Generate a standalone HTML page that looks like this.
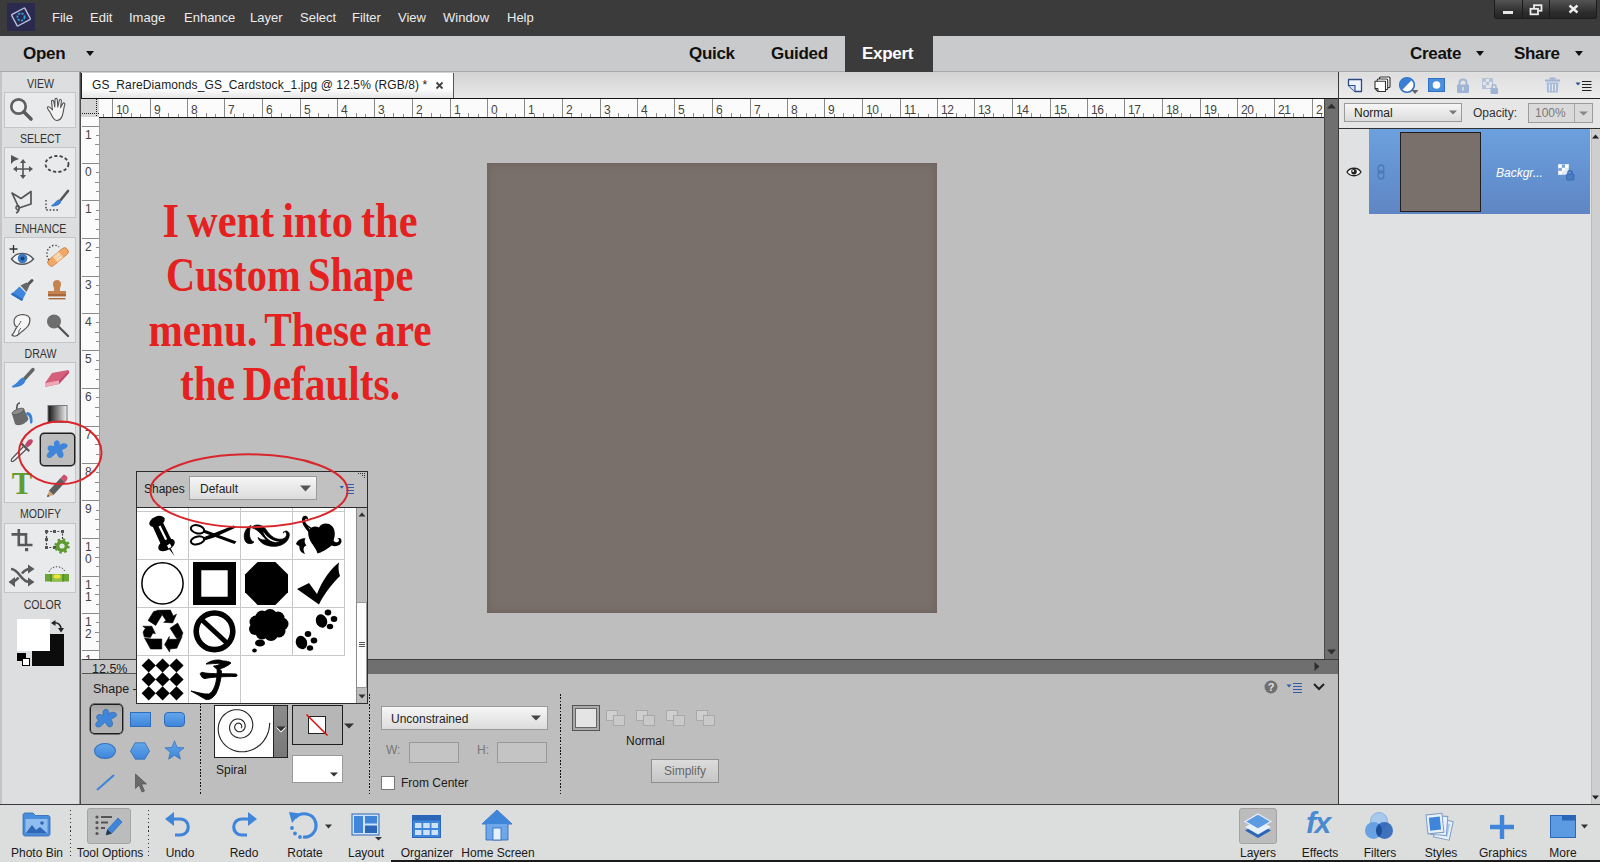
<!DOCTYPE html>
<html>
<head>
<meta charset="utf-8">
<title>Photoshop Elements</title>
<style>
*{box-sizing:border-box;margin:0;padding:0}
html,body{width:1600px;height:862px;overflow:hidden;background:#bdbdbd;font-family:"Liberation Sans",sans-serif;font-size:12px;color:#222}
.abs{position:absolute}
#root{position:relative;width:1600px;height:862px;overflow:hidden}
/* top bars */
#menubar{left:0;top:0;width:1600px;height:36px;background:#3b3b3b}
#menubar span{position:absolute;top:10px;font-size:13px;color:#ececec;white-space:nowrap}
#modebar{left:0;top:36px;width:1600px;height:36px;background:#c9cacb;border-bottom:1px solid #a9a9a9}
.mode{position:absolute;top:8px;font-size:17px;font-weight:bold;color:#111;white-space:nowrap;letter-spacing:-0.3px}
/* left toolbar */
#toolbar{left:0;top:72px;width:81px;height:733px;background:#dddedf}
.tlabel{position:absolute;left:0;width:81px;text-align:center;font-size:12px;color:#333;transform:scaleX(.88)}
.tgroup{position:absolute;left:4px;width:72px;background:#e9eaeb;border:1px solid #c4c5c6}
/* doc area */
.rl{position:absolute;font-size:12px;color:#444;line-height:12px;letter-spacing:-0.300px}
.dd{background:linear-gradient(#f6f6f6,#dcdcdc);border:1px solid #9a9a9a;font-size:12px;color:#222}
.dd span{position:absolute;white-space:nowrap}
.tl{position:absolute;width:100px;text-align:center;font-size:12px;color:#1a1a1a;white-space:nowrap}
#tabbar{left:81px;top:72px;width:1258px;height:26px;background:linear-gradient(#d2d2d2,#e9e9e9)}
#tab{left:81px;top:73px;width:373px;height:25px;background:linear-gradient(#ffffff 60%,#e6e6e6);border-right:1px solid #555;border-left:1px solid #222}
#canvas{left:99px;top:118px;width:1225px;height:541px;background:#bebebe}
#photo{left:487px;top:163px;width:450px;height:450px;background:#7a706b;box-shadow:inset 0 0 7px 1px rgba(100,88,78,.55)}
#rightpanel{left:1339px;top:72px;width:261px;height:733px;background:#e0e1e2}
#options{left:81px;top:674px;width:1257px;height:130px;background:#bebebe}
#taskbar{left:0;top:805px;width:1600px;height:57px;background:#dcdddd}
</style>
</head>
<body>
<div id="root">
<div id="menubar" class="abs">
<svg class="abs" style="left:6px;top:2px" width="30" height="30" viewBox="0 0 30 30"><rect x="1" y="1" width="28" height="28" fill="#2b2a4e"/><g transform="rotate(-28 15 15)"><rect x="7.5" y="8.5" width="15" height="13" rx="1" fill="none" stroke="#b9c6e6" stroke-width="1.3"/></g><circle cx="15" cy="15" r="3.6" fill="none" stroke="#2f9fe6" stroke-width="1.8" stroke-dasharray="2.2 1.2"/></svg>
<span style="left:52px">File</span><span style="left:90px">Edit</span><span style="left:129px">Image</span><span style="left:184px">Enhance</span><span style="left:250px">Layer</span><span style="left:300px">Select</span><span style="left:352px">Filter</span><span style="left:398px">View</span><span style="left:443px">Window</span><span style="left:507px">Help</span>
<div class="abs" style="left:1494px;top:0;width:103px;height:19px;background:linear-gradient(#545454,#2c2c2c 70%,#262626);border:1px solid #1c1c1c;border-top:none;border-radius:0 0 3px 3px"></div>
<div class="abs" style="left:1522px;top:0px;width:1px;height:18px;background:#1c1c1c"></div>
<div class="abs" style="left:1549px;top:0px;width:1px;height:18px;background:#1c1c1c"></div>
<div class="abs" style="left:1503px;top:11px;width:10px;height:3px;background:#e6e6e6"></div>
<svg class="abs" style="left:1529px;top:4px" width="14" height="12" viewBox="0 0 14 12"><rect x="5" y="1.200" width="7.500" height="5.500" fill="none" stroke="#ececec" stroke-width="1.800"/><rect x="1.500" y="4.800" width="7.500" height="5.500" fill="#3a3a3a" stroke="#ececec" stroke-width="1.800"/></svg>
<svg class="abs" style="left:1568px;top:4px" width="11" height="10" viewBox="0 0 11 10"><path d="M1.500 1.500 L9.500 8.500 M9.500 1.500 L1.500 8.500" stroke="#ececec" stroke-width="2.400" fill="none"/></svg>
</div>
<div id="modebar" class="abs">
<span class="mode" style="left:23px">Open</span>
<div class="abs" style="left:86px;top:15px;border:4px solid transparent;border-top:5px solid #111;border-bottom:none"></div>
<span class="mode" style="left:689px">Quick</span>
<span class="mode" style="left:771px">Guided</span>
<div class="abs" style="left:845px;top:0;width:88px;height:36px;background:#3b3b3b"></div>
<span class="mode" style="left:862px;color:#fff">Expert</span>
<span class="mode" style="left:1410px">Create</span>
<div class="abs" style="left:1476px;top:15px;border:4px solid transparent;border-top:5px solid #111;border-bottom:none"></div>
<span class="mode" style="left:1514px">Share</span>
<div class="abs" style="left:1575px;top:15px;border:4px solid transparent;border-top:5px solid #111;border-bottom:none"></div>
</div>
<div id="toolbar" class="abs"><div class="abs" style="left:0;top:0;width:2px;height:733px;background:#c4c5c6"></div>
<div class="tgroup" style="top:20px;height:36px"></div>
<div class="tgroup" style="top:75px;height:71px"></div>
<div class="tgroup" style="top:165px;height:106px"></div>
<div class="tgroup" style="top:290px;height:141px"></div>
<div class="tgroup" style="top:451px;height:70px"></div>
<div class="tlabel" style="top:5px">VIEW</div>
<div class="tlabel" style="top:60px">SELECT</div>
<div class="tlabel" style="top:150px">ENHANCE</div>
<div class="tlabel" style="top:275px">DRAW</div>
<div class="tlabel" style="top:435px">MODIFY</div>
<div class="tlabel" style="top:526px;left:2px">COLOR</div>
<div class="abs" style="left:40px;top:361px;width:35px;height:33px;background:#bdbdbd;border:1px solid #1c1c1c;box-shadow:0 0 0 0.400px #1c1c1c;border-radius:4px"></div>
<svg class="abs" style="left:6px;top:22px" width="30" height="30" viewBox="0 0 30 30"><circle cx="12.500" cy="12.500" r="7.200" fill="#eef0f1" stroke="#606060" stroke-width="2.700"/><path d="M18 18 L25 25" stroke="#5a5a5a" stroke-width="3.600" stroke-linecap="round"/></svg><svg class="abs" style="left:42px;top:23px" width="30" height="30" viewBox="0 0 30 30"><path d="M8 17 C6 14 4.5 13 5.5 12 C7 11 9 13 10.5 15 L9.5 6.5 C9.5 5 11.5 5 11.8 6.5 L12.8 12 L13 4.5 C13 3 15.2 3 15.3 4.5 L15.8 12 L17.3 5.5 C17.6 4 19.6 4.4 19.4 6 L18.6 12.6 L20.8 8.5 C21.5 7.2 23.3 8 22.8 9.5 C21.5 13.5 21.5 17 20.5 20 C19.5 23.5 17.5 25.5 14.5 25.5 C11.5 25.5 9.5 20 8 17 Z" fill="#f4f4f4" stroke="#555" stroke-width="1.1" stroke-linejoin="round"/></svg><svg class="abs" style="left:7px;top:79px" width="30" height="30" viewBox="0 0 30 30"><path d="M4 4 L4 13 L7 10 L12 8 Z" fill="#555"/><path d="M16 10 V26 M8 18 H24" stroke="#555" stroke-width="1.6" fill="none"/><path d="M16 8 L13 12 H19 Z M16 28 L13 24 H19 Z M6 18 L10 15 V21 Z M26 18 L22 15 V21 Z" fill="#555"/></svg><svg class="abs" style="left:42px;top:77px" width="30" height="30" viewBox="0 0 30 30"><ellipse cx="15" cy="15" rx="11.5" ry="8" fill="none" stroke="#444" stroke-width="1.8" stroke-dasharray="3.2 2.2"/></svg><svg class="abs" style="left:7px;top:114px" width="30" height="30" viewBox="0 0 30 30"><path d="M5 7 L14 12.5 L24 5.5 L24 18 L12 22 L5 7 Z" fill="none" stroke="#555" stroke-width="1.7" stroke-linejoin="round"/><path d="M12 20 C9 19 8 22 10 23.5 C12 24.5 13 22 12 20 C12.5 23 12 26 9 27" fill="none" stroke="#555" stroke-width="1.5"/></svg><svg class="abs" style="left:42px;top:114px" width="30" height="30" viewBox="0 0 30 30"><path d="M26 5 L17.5 15.5" stroke="#555" stroke-width="2.6" stroke-linecap="round"/><path d="M18.5 14.5 C20 17 17 20 11 20.5 C9 20.5 8.5 19.5 10.5 18.5 C13 17 14 14.5 16.5 13.5 Z" fill="#3d7fd0"/><path d="M4 14 V24 H17" fill="none" stroke="#444" stroke-width="1.4" stroke-dasharray="1.6 1.8"/></svg><svg class="abs" style="left:8px;top:170px" width="30" height="30" viewBox="0 0 30 30"><path d="M3.5 17 C9 9.5 19 9.5 25.5 17 C19 24 9 24 3.5 17 Z" fill="#f4f4f4" stroke="#555" stroke-width="1.4"/><circle cx="14.5" cy="16.5" r="4.8" fill="#3c78c2"/><circle cx="14.5" cy="16.5" r="2" fill="#173f7c"/><path d="M5.5 3 V11 M1.5 7 H9.5" stroke="#333" stroke-width="1.3"/></svg><svg class="abs" style="left:42px;top:169px" width="30" height="30" viewBox="0 0 30 30"><g transform="rotate(-40 16 16)"><rect x="4" y="12.300" width="24" height="7.400" rx="3.200" fill="#f1a866" stroke="#c97f3f" stroke-width="0.800"/><rect x="12" y="12.300" width="8" height="7.400" fill="#f7cba0"/><circle cx="14.5" cy="14.5" r="0.7" fill="#fff"/><circle cx="17.5" cy="14.5" r="0.7" fill="#fff"/><circle cx="14.5" cy="17.5" r="0.7" fill="#fff"/><circle cx="17.5" cy="17.5" r="0.7" fill="#fff"/></g><path d="M7 19 C3 14 5 6 11 4.5 C14 4 16 5 17 6" fill="none" stroke="#444" stroke-width="1.4" stroke-dasharray="1.5 1.8"/></svg><svg class="abs" style="left:7px;top:203px" width="30" height="30" viewBox="0 0 30 30"><path d="M25 5.5 L19 11.5" stroke="#555" stroke-width="3" stroke-linecap="round"/><path d="M13.5 10.5 L19.5 7.5 L22.5 10.5 L19.5 17 Z" fill="#666"/><path d="M12.5 11.5 L19 18 L15 26 L4 19.5 Z" fill="#3f87dc"/><path d="M4 19.5 L15 26 L16 24 L5 17.5Z" fill="#2b6cbd"/></svg><svg class="abs" style="left:42px;top:203px" width="30" height="30" viewBox="0 0 30 30"><path d="M12 13 C10 9 11 5 15 5 C19 5 20 9 18 13 L18 16 H24 V21 H6 V16 H12 Z" fill="#c58350"/><rect x="6" y="19" width="18" height="2.4" fill="#a7683a"/><rect x="6.5" y="23" width="17" height="1.4" fill="#a7683a"/></svg><svg class="abs" style="left:7px;top:238px" width="30" height="30" viewBox="0 0 30 30"><path d="M5 25 C8 22 8 19 10 17 C7 16 6 11 8 8 C10 4.5 17 3.5 21 6 C24 8 23 13 21 16 C19 19 15 21 12 24 C10 26 7 27 5 25 Z" fill="#f6f6f6" stroke="#555" stroke-width="1.2"/><path d="M10 17 C12 15 13 13 14 11 M12 24 C11 22 12 20 14 18" fill="none" stroke="#555" stroke-width="1"/></svg><svg class="abs" style="left:42px;top:238px" width="30" height="30" viewBox="0 0 30 30"><circle cx="12" cy="11.5" r="7" fill="#6e6e6e"/><path d="M16.5 16.5 L26 26" stroke="#555" stroke-width="2.4" stroke-linecap="round"/></svg><svg class="abs" style="left:7px;top:293px" width="30" height="30" viewBox="0 0 30 30"><path d="M26 4.500 L16.500 15" stroke="#646464" stroke-width="3.400" stroke-linecap="round"/><path d="M17.8 14 C19.5 17 16 21.5 7 22.5 C4.5 22.7 4 21.5 6 20.5 C9.5 19 11.5 15 15.5 12.5 Z" fill="#3d82d6"/></svg><svg class="abs" style="left:42px;top:293px" width="30" height="30" viewBox="0 0 30 30"><path d="M10 8 L26 5 L27 8 L17 19 L3 22 L3 18 Z" fill="#d4607c"/><path d="M3 18 L17 15.5 L17 19 L3 22 Z" fill="#f0a6b6"/><path d="M17 15.5 L27 5 L27 8 L17 19 Z" fill="#c04c6a"/></svg><svg class="abs" style="left:7px;top:328px" width="30" height="30" viewBox="0 0 30 30"><path d="M13 3 C9.5 3 9.5 8 10 12" fill="none" stroke="#555" stroke-width="1.6"/><path d="M5 14 L17 9 L21.5 19 C19 24 11 27 8 24 Z" fill="#6a6a6a"/><ellipse cx="11" cy="11.5" rx="6.4" ry="2.4" transform="rotate(-22 11 11.5)" fill="#8c8c8c" stroke="#555" stroke-width="0.8"/><path d="M20 12 C24 12 26 16 25.5 22 C25.2 24 22.8 24 23 22 C23.2 17 21 15 18.5 14.5 Z" fill="#3d82d6"/></svg><svg class="abs" style="left:42px;top:328px" width="30" height="30" viewBox="0 0 30 30"><defs><linearGradient id="gr1" x1="0" x2="1"><stop offset="0" stop-color="#111"/><stop offset="1" stop-color="#f2f2f2"/></linearGradient></defs><rect x="6" y="5.5" width="19" height="17" fill="url(#gr1)" stroke="#777" stroke-width="1"/></svg><svg class="abs" style="left:7px;top:363px" width="30" height="30" viewBox="0 0 30 30"><path d="M16.5 11.5 L6 22.5 C4.5 24 3.5 26 5 26.5 C6.5 27 8 25 9.5 23.5 L19.5 14" fill="#f2f2f2" stroke="#555" stroke-width="1.3"/><path d="M15 9 L21.5 15.5" stroke="#555" stroke-width="2.4" stroke-linecap="round"/><path d="M18 10.5 C19 7 22 3 25 4.5 C27.5 6.5 24 10 20.5 12.5 Z" fill="#c2456a"/></svg><div class="abs" style="left:7px;top:396px;width:30px;height:32px;font-family:'Liberation Serif',serif;font-weight:bold;font-size:30.500px;line-height:32px;color:#639b33;text-align:center">T</div><svg class="abs" style="left:41px;top:398px" width="30" height="30" viewBox="0 0 30 30"><path d="M6 27 L8 20.5 L12.5 25 Z" fill="#d4a574"/><path d="M8 20.5 L19.5 8 L24 12.5 L12.5 25 Z" fill="#5e5e5e"/><path d="M19.5 8 L22 5.2 C23.5 3.5 27.5 7 26.3 9.3 L24 12.5 Z" fill="#d0506f"/><path d="M6 27 L6.8 24.5 L8.5 26.2 Z" fill="#444"/></svg><svg class="abs" style="left:7px;top:455px" width="30" height="30" viewBox="7 527 30 30"><path d="M18.800 529 V545 H32.500 M11.500 534.400 H26 V545" fill="none" stroke="#585858" stroke-width="2.600"/><rect x="25" y="548" width="3.200" height="3.200" fill="#585858"/></svg><svg class="abs" style="left:42px;top:455px" width="30" height="30" viewBox="0 0 30 30"><rect x="4.500" y="4.500" width="16" height="16" fill="none" stroke="#444" stroke-width="1.2" stroke-dasharray="2 1.6"/><rect x="3" y="3" width="3" height="3" fill="#555"/><rect x="11" y="3" width="3" height="3" fill="#555"/><rect x="19" y="3" width="3" height="3" fill="#555"/><rect x="3" y="11" width="3" height="3" fill="#555"/><rect x="3" y="19" width="3" height="3" fill="#555"/><rect x="11" y="19" width="3" height="3" fill="#555"/><circle cx="20" cy="19" r="6" fill="#5e9a2f" stroke="#5e9a2f" stroke-width="3.4" stroke-dasharray="2.3 2.4"/><circle cx="20" cy="19" r="2.6" fill="#e6e8e8"/></svg><svg class="abs" style="left:7px;top:488px" width="30" height="30" viewBox="0 0 30 30"><path d="M4 9 C12 9 14 22 22 22 M4 22 C8 22 10 19.5 11.5 17.5 M15 13.5 C17 11 19 9 23 9" fill="none" stroke="#5a5a5a" stroke-width="2.6"/><path d="M21 4.5 L27.5 9 L21 13.500 Z M21 17.500 L27.5 22 L21 26.500 Z" fill="#5a5a5a"/><path d="M8 17 L1.5 22 L8 27 Z" fill="#5a5a5a"/></svg><svg class="abs" style="left:42px;top:488px" width="30" height="30" viewBox="0 0 30 30"><rect x="3" y="14" width="24" height="7.5" fill="#6aa534"/><rect x="9" y="14" width="12" height="7.5" fill="#8cc04a"/><rect x="8.500" y="14" width="1.2" height="7.5" fill="#4c7f1f"/><rect x="20.300" y="14" width="1.2" height="7.5" fill="#4c7f1f"/><ellipse cx="15" cy="16.500" rx="3.6" ry="2" fill="#f4e23a"/><path d="M7 12 C9 5 21 5 23 12" fill="none" stroke="#444" stroke-width="1" stroke-dasharray="1.4 1.6"/></svg><svg class="abs" style="left:42px;top:363px" width="30" height="30" viewBox="0 0 30 30"><path d="M14 5.5 C17 4.5 18.5 8 17.5 10 C20 8 24 7.5 25.5 10 C26.5 13 22 13.5 20 15.5 C22 18 22.5 22.5 19 23 C16 23 15.5 20 14.5 18 C12 19.5 10 23.5 6.5 23 C3.5 22 4.5 18.5 7.5 16.5 C5.5 15 4.5 11.5 7.5 10.500 C10 10 11 11.5 12.5 11 C11.5 9 11.5 6.500 14 5.500 Z" fill="#3f86db"/></svg>
<div class="abs" style="left:32px;top:562px;width:32px;height:32px;background:#0c0c0c"></div>
<div class="abs" style="left:17px;top:547px;width:33px;height:32px;background:#fff"></div>
<div class="abs" style="left:17px;top:581px;width:9px;height:8px;background:#000"></div>
<div class="abs" style="left:22px;top:586px;width:8px;height:8px;background:#fff;border:1px solid #000"></div>
<svg class="abs" style="left:50px;top:547px" width="15" height="14" viewBox="0 0 15 14"><path d="M3.5 4 C8 3 11 6 11 10" fill="none" stroke="#222" stroke-width="1.6"/><path d="M1 4 L5.5 1 V7 Z M11 13.500 L8 9 H14 Z" fill="#222"/></svg>
</div>
<div id="tabbar" class="abs"></div>
<div id="tab" class="abs"><span class="abs" style="left:10px;top:5px;font-size:12px;color:#1a1a1a;white-space:nowrap;letter-spacing:0.110px">GS_RareDiamonds_GS_Cardstock_1.jpg @ 12.5% (RGB/8) *</span>
<svg class="abs" style="left:353px;top:8px" width="9" height="9" viewBox="0 0 9 9"><path d="M1.5 1.5 L7.5 7.5 M7.5 1.5 L1.5 7.5" stroke="#444" stroke-width="1.8"/></svg></div>
<div class="abs" style="left:81px;top:98px;width:1258px;height:1px;background:#141414"></div>
<div class="abs" style="left:79px;top:72px;width:2px;height:733px;background:linear-gradient(90deg,#b4b4b4,#2a2a2a)"></div>
<div class="abs" style="left:81px;top:99px;width:1243px;height:18px;background:#fbfbfb"></div>
<div class="abs" style="left:81px;top:117px;width:18px;height:542px;background:#fbfbfb"></div>
<div class="abs" style="left:81px;top:99px;width:18px;height:18px;background:#d4d4d4"></div>
<svg class="abs" style="left:82px;top:99px" width="18" height="19" viewBox="0 0 18 19"><path d="M0 14.500 H17 M14.500 0 V18" stroke="#222" stroke-width="1" stroke-dasharray="1 1"/></svg>
<div class="abs" style="left:99px;top:117px;width:1225px;height:1px;background:#111"></div>
<svg class="abs" style="left:99px;top:99px" width="1224" height="18" viewBox="0 0 1224 18"><rect x="4" y="15" width="1" height="3" fill="#8a8a8a"/><rect x="13" y="0" width="1" height="18" fill="#8a8a8a"/><rect x="22" y="15" width="1" height="3" fill="#8a8a8a"/><rect x="32" y="14" width="1" height="4" fill="#8a8a8a"/><rect x="41" y="15" width="1" height="3" fill="#8a8a8a"/><rect x="51" y="0" width="1" height="18" fill="#8a8a8a"/><rect x="60" y="15" width="1" height="3" fill="#8a8a8a"/><rect x="69" y="14" width="1" height="4" fill="#8a8a8a"/><rect x="79" y="15" width="1" height="3" fill="#8a8a8a"/><rect x="88" y="0" width="1" height="18" fill="#8a8a8a"/><rect x="97" y="15" width="1" height="3" fill="#8a8a8a"/><rect x="107" y="14" width="1" height="4" fill="#8a8a8a"/><rect x="116" y="15" width="1" height="3" fill="#8a8a8a"/><rect x="125" y="0" width="1" height="18" fill="#8a8a8a"/><rect x="135" y="15" width="1" height="3" fill="#8a8a8a"/><rect x="144" y="14" width="1" height="4" fill="#8a8a8a"/><rect x="154" y="15" width="1" height="3" fill="#8a8a8a"/><rect x="163" y="0" width="1" height="18" fill="#8a8a8a"/><rect x="172" y="15" width="1" height="3" fill="#8a8a8a"/><rect x="182" y="14" width="1" height="4" fill="#8a8a8a"/><rect x="191" y="15" width="1" height="3" fill="#8a8a8a"/><rect x="201" y="0" width="1" height="18" fill="#8a8a8a"/><rect x="210" y="15" width="1" height="3" fill="#8a8a8a"/><rect x="219" y="14" width="1" height="4" fill="#8a8a8a"/><rect x="229" y="15" width="1" height="3" fill="#8a8a8a"/><rect x="238" y="0" width="1" height="18" fill="#8a8a8a"/><rect x="247" y="15" width="1" height="3" fill="#8a8a8a"/><rect x="257" y="14" width="1" height="4" fill="#8a8a8a"/><rect x="266" y="15" width="1" height="3" fill="#8a8a8a"/><rect x="275" y="0" width="1" height="18" fill="#8a8a8a"/><rect x="285" y="15" width="1" height="3" fill="#8a8a8a"/><rect x="294" y="14" width="1" height="4" fill="#8a8a8a"/><rect x="304" y="15" width="1" height="3" fill="#8a8a8a"/><rect x="313" y="0" width="1" height="18" fill="#8a8a8a"/><rect x="322" y="15" width="1" height="3" fill="#8a8a8a"/><rect x="332" y="14" width="1" height="4" fill="#8a8a8a"/><rect x="341" y="15" width="1" height="3" fill="#8a8a8a"/><rect x="351" y="0" width="1" height="18" fill="#8a8a8a"/><rect x="360" y="15" width="1" height="3" fill="#8a8a8a"/><rect x="369" y="14" width="1" height="4" fill="#8a8a8a"/><rect x="379" y="15" width="1" height="3" fill="#8a8a8a"/><rect x="388" y="0" width="1" height="18" fill="#8a8a8a"/><rect x="397" y="15" width="1" height="3" fill="#8a8a8a"/><rect x="407" y="14" width="1" height="4" fill="#8a8a8a"/><rect x="416" y="15" width="1" height="3" fill="#8a8a8a"/><rect x="425" y="0" width="1" height="18" fill="#8a8a8a"/><rect x="435" y="15" width="1" height="3" fill="#8a8a8a"/><rect x="444" y="14" width="1" height="4" fill="#8a8a8a"/><rect x="454" y="15" width="1" height="3" fill="#8a8a8a"/><rect x="463" y="0" width="1" height="18" fill="#8a8a8a"/><rect x="472" y="15" width="1" height="3" fill="#8a8a8a"/><rect x="482" y="14" width="1" height="4" fill="#8a8a8a"/><rect x="491" y="15" width="1" height="3" fill="#8a8a8a"/><rect x="501" y="0" width="1" height="18" fill="#8a8a8a"/><rect x="510" y="15" width="1" height="3" fill="#8a8a8a"/><rect x="519" y="14" width="1" height="4" fill="#8a8a8a"/><rect x="529" y="15" width="1" height="3" fill="#8a8a8a"/><rect x="538" y="0" width="1" height="18" fill="#8a8a8a"/><rect x="547" y="15" width="1" height="3" fill="#8a8a8a"/><rect x="557" y="14" width="1" height="4" fill="#8a8a8a"/><rect x="566" y="15" width="1" height="3" fill="#8a8a8a"/><rect x="575" y="0" width="1" height="18" fill="#8a8a8a"/><rect x="585" y="15" width="1" height="3" fill="#8a8a8a"/><rect x="594" y="14" width="1" height="4" fill="#8a8a8a"/><rect x="604" y="15" width="1" height="3" fill="#8a8a8a"/><rect x="613" y="0" width="1" height="18" fill="#8a8a8a"/><rect x="622" y="15" width="1" height="3" fill="#8a8a8a"/><rect x="632" y="14" width="1" height="4" fill="#8a8a8a"/><rect x="641" y="15" width="1" height="3" fill="#8a8a8a"/><rect x="651" y="0" width="1" height="18" fill="#8a8a8a"/><rect x="660" y="15" width="1" height="3" fill="#8a8a8a"/><rect x="669" y="14" width="1" height="4" fill="#8a8a8a"/><rect x="679" y="15" width="1" height="3" fill="#8a8a8a"/><rect x="688" y="0" width="1" height="18" fill="#8a8a8a"/><rect x="697" y="15" width="1" height="3" fill="#8a8a8a"/><rect x="707" y="14" width="1" height="4" fill="#8a8a8a"/><rect x="716" y="15" width="1" height="3" fill="#8a8a8a"/><rect x="725" y="0" width="1" height="18" fill="#8a8a8a"/><rect x="735" y="15" width="1" height="3" fill="#8a8a8a"/><rect x="744" y="14" width="1" height="4" fill="#8a8a8a"/><rect x="754" y="15" width="1" height="3" fill="#8a8a8a"/><rect x="763" y="0" width="1" height="18" fill="#8a8a8a"/><rect x="772" y="15" width="1" height="3" fill="#8a8a8a"/><rect x="782" y="14" width="1" height="4" fill="#8a8a8a"/><rect x="791" y="15" width="1" height="3" fill="#8a8a8a"/><rect x="801" y="0" width="1" height="18" fill="#8a8a8a"/><rect x="810" y="15" width="1" height="3" fill="#8a8a8a"/><rect x="819" y="14" width="1" height="4" fill="#8a8a8a"/><rect x="829" y="15" width="1" height="3" fill="#8a8a8a"/><rect x="838" y="0" width="1" height="18" fill="#8a8a8a"/><rect x="847" y="15" width="1" height="3" fill="#8a8a8a"/><rect x="857" y="14" width="1" height="4" fill="#8a8a8a"/><rect x="866" y="15" width="1" height="3" fill="#8a8a8a"/><rect x="875" y="0" width="1" height="18" fill="#8a8a8a"/><rect x="885" y="15" width="1" height="3" fill="#8a8a8a"/><rect x="894" y="14" width="1" height="4" fill="#8a8a8a"/><rect x="904" y="15" width="1" height="3" fill="#8a8a8a"/><rect x="913" y="0" width="1" height="18" fill="#8a8a8a"/><rect x="922" y="15" width="1" height="3" fill="#8a8a8a"/><rect x="932" y="14" width="1" height="4" fill="#8a8a8a"/><rect x="941" y="15" width="1" height="3" fill="#8a8a8a"/><rect x="951" y="0" width="1" height="18" fill="#8a8a8a"/><rect x="960" y="15" width="1" height="3" fill="#8a8a8a"/><rect x="969" y="14" width="1" height="4" fill="#8a8a8a"/><rect x="979" y="15" width="1" height="3" fill="#8a8a8a"/><rect x="988" y="0" width="1" height="18" fill="#8a8a8a"/><rect x="997" y="15" width="1" height="3" fill="#8a8a8a"/><rect x="1007" y="14" width="1" height="4" fill="#8a8a8a"/><rect x="1016" y="15" width="1" height="3" fill="#8a8a8a"/><rect x="1025" y="0" width="1" height="18" fill="#8a8a8a"/><rect x="1035" y="15" width="1" height="3" fill="#8a8a8a"/><rect x="1044" y="14" width="1" height="4" fill="#8a8a8a"/><rect x="1054" y="15" width="1" height="3" fill="#8a8a8a"/><rect x="1063" y="0" width="1" height="18" fill="#8a8a8a"/><rect x="1072" y="15" width="1" height="3" fill="#8a8a8a"/><rect x="1082" y="14" width="1" height="4" fill="#8a8a8a"/><rect x="1091" y="15" width="1" height="3" fill="#8a8a8a"/><rect x="1101" y="0" width="1" height="18" fill="#8a8a8a"/><rect x="1110" y="15" width="1" height="3" fill="#8a8a8a"/><rect x="1119" y="14" width="1" height="4" fill="#8a8a8a"/><rect x="1129" y="15" width="1" height="3" fill="#8a8a8a"/><rect x="1138" y="0" width="1" height="18" fill="#8a8a8a"/><rect x="1147" y="15" width="1" height="3" fill="#8a8a8a"/><rect x="1157" y="14" width="1" height="4" fill="#8a8a8a"/><rect x="1166" y="15" width="1" height="3" fill="#8a8a8a"/><rect x="1175" y="0" width="1" height="18" fill="#8a8a8a"/><rect x="1185" y="15" width="1" height="3" fill="#8a8a8a"/><rect x="1194" y="14" width="1" height="4" fill="#8a8a8a"/><rect x="1204" y="15" width="1" height="3" fill="#8a8a8a"/><rect x="1213" y="0" width="1" height="18" fill="#8a8a8a"/><rect x="1222" y="15" width="1" height="3" fill="#8a8a8a"/></svg><div class="abs" style="left:0;top:0;width:1323px;height:117px;overflow:hidden"><span class="rl" style="left:116px;top:104px">10</span><span class="rl" style="left:154px;top:104px">9</span><span class="rl" style="left:191px;top:104px">8</span><span class="rl" style="left:228px;top:104px">7</span><span class="rl" style="left:266px;top:104px">6</span><span class="rl" style="left:304px;top:104px">5</span><span class="rl" style="left:341px;top:104px">4</span><span class="rl" style="left:378px;top:104px">3</span><span class="rl" style="left:416px;top:104px">2</span><span class="rl" style="left:454px;top:104px">1</span><span class="rl" style="left:491px;top:104px">0</span><span class="rl" style="left:528px;top:104px">1</span><span class="rl" style="left:566px;top:104px">2</span><span class="rl" style="left:604px;top:104px">3</span><span class="rl" style="left:641px;top:104px">4</span><span class="rl" style="left:678px;top:104px">5</span><span class="rl" style="left:716px;top:104px">6</span><span class="rl" style="left:754px;top:104px">7</span><span class="rl" style="left:791px;top:104px">8</span><span class="rl" style="left:828px;top:104px">9</span><span class="rl" style="left:866px;top:104px">10</span><span class="rl" style="left:904px;top:104px">11</span><span class="rl" style="left:941px;top:104px">12</span><span class="rl" style="left:978px;top:104px">13</span><span class="rl" style="left:1016px;top:104px">14</span><span class="rl" style="left:1054px;top:104px">15</span><span class="rl" style="left:1091px;top:104px">16</span><span class="rl" style="left:1128px;top:104px">17</span><span class="rl" style="left:1166px;top:104px">18</span><span class="rl" style="left:1204px;top:104px">19</span><span class="rl" style="left:1241px;top:104px">20</span><span class="rl" style="left:1278px;top:104px">21</span><span class="rl" style="left:1316px;top:104px">22</span></div><svg class="abs" style="left:82px;top:118px" width="17" height="541" viewBox="0 0 17 541"><rect x="0" y="8" width="17" height="1" fill="#8a8a8a"/><rect x="14" y="17" width="3" height="1" fill="#8a8a8a"/><rect x="13" y="26" width="4" height="1" fill="#8a8a8a"/><rect x="14" y="36" width="3" height="1" fill="#8a8a8a"/><rect x="0" y="45" width="17" height="1" fill="#8a8a8a"/><rect x="14" y="54" width="3" height="1" fill="#8a8a8a"/><rect x="13" y="64" width="4" height="1" fill="#8a8a8a"/><rect x="14" y="73" width="3" height="1" fill="#8a8a8a"/><rect x="0" y="82" width="17" height="1" fill="#8a8a8a"/><rect x="14" y="92" width="3" height="1" fill="#8a8a8a"/><rect x="13" y="101" width="4" height="1" fill="#8a8a8a"/><rect x="14" y="111" width="3" height="1" fill="#8a8a8a"/><rect x="0" y="120" width="17" height="1" fill="#8a8a8a"/><rect x="14" y="129" width="3" height="1" fill="#8a8a8a"/><rect x="13" y="139" width="4" height="1" fill="#8a8a8a"/><rect x="14" y="148" width="3" height="1" fill="#8a8a8a"/><rect x="0" y="158" width="17" height="1" fill="#8a8a8a"/><rect x="14" y="167" width="3" height="1" fill="#8a8a8a"/><rect x="13" y="176" width="4" height="1" fill="#8a8a8a"/><rect x="14" y="186" width="3" height="1" fill="#8a8a8a"/><rect x="0" y="195" width="17" height="1" fill="#8a8a8a"/><rect x="14" y="204" width="3" height="1" fill="#8a8a8a"/><rect x="13" y="214" width="4" height="1" fill="#8a8a8a"/><rect x="14" y="223" width="3" height="1" fill="#8a8a8a"/><rect x="0" y="232" width="17" height="1" fill="#8a8a8a"/><rect x="14" y="242" width="3" height="1" fill="#8a8a8a"/><rect x="13" y="251" width="4" height="1" fill="#8a8a8a"/><rect x="14" y="261" width="3" height="1" fill="#8a8a8a"/><rect x="0" y="270" width="17" height="1" fill="#8a8a8a"/><rect x="14" y="279" width="3" height="1" fill="#8a8a8a"/><rect x="13" y="289" width="4" height="1" fill="#8a8a8a"/><rect x="14" y="298" width="3" height="1" fill="#8a8a8a"/><rect x="0" y="308" width="17" height="1" fill="#8a8a8a"/><rect x="14" y="317" width="3" height="1" fill="#8a8a8a"/><rect x="13" y="326" width="4" height="1" fill="#8a8a8a"/><rect x="14" y="336" width="3" height="1" fill="#8a8a8a"/><rect x="0" y="345" width="17" height="1" fill="#8a8a8a"/><rect x="14" y="354" width="3" height="1" fill="#8a8a8a"/><rect x="13" y="364" width="4" height="1" fill="#8a8a8a"/><rect x="14" y="373" width="3" height="1" fill="#8a8a8a"/><rect x="0" y="382" width="17" height="1" fill="#8a8a8a"/><rect x="14" y="392" width="3" height="1" fill="#8a8a8a"/><rect x="13" y="401" width="4" height="1" fill="#8a8a8a"/><rect x="14" y="411" width="3" height="1" fill="#8a8a8a"/><rect x="0" y="420" width="17" height="1" fill="#8a8a8a"/><rect x="14" y="429" width="3" height="1" fill="#8a8a8a"/><rect x="13" y="439" width="4" height="1" fill="#8a8a8a"/><rect x="14" y="448" width="3" height="1" fill="#8a8a8a"/><rect x="0" y="458" width="17" height="1" fill="#8a8a8a"/><rect x="14" y="467" width="3" height="1" fill="#8a8a8a"/><rect x="13" y="476" width="4" height="1" fill="#8a8a8a"/><rect x="14" y="486" width="3" height="1" fill="#8a8a8a"/><rect x="0" y="495" width="17" height="1" fill="#8a8a8a"/><rect x="14" y="504" width="3" height="1" fill="#8a8a8a"/><rect x="13" y="514" width="4" height="1" fill="#8a8a8a"/><rect x="14" y="523" width="3" height="1" fill="#8a8a8a"/><rect x="0" y="532" width="17" height="1" fill="#8a8a8a"/></svg><span class="rl" style="left:85px;top:129px">1</span><span class="rl" style="left:85px;top:166px">0</span><span class="rl" style="left:85px;top:203px">1</span><span class="rl" style="left:85px;top:241px">2</span><span class="rl" style="left:85px;top:279px">3</span><span class="rl" style="left:85px;top:316px">4</span><span class="rl" style="left:85px;top:353px">5</span><span class="rl" style="left:85px;top:391px">6</span><span class="rl" style="left:85px;top:429px">7</span><span class="rl" style="left:85px;top:466px">8</span><span class="rl" style="left:85px;top:503px">9</span><span class="rl" style="left:85px;top:541px">1</span><span class="rl" style="left:85px;top:553px">0</span><span class="rl" style="left:85px;top:579px">1</span><span class="rl" style="left:85px;top:591px">1</span><span class="rl" style="left:85px;top:616px">1</span><span class="rl" style="left:85px;top:628px">2</span><span class="rl" style="left:85px;top:654px">1</span>
<div id="canvas" class="abs"></div>
<div class="abs" style="left:99px;top:118px;width:1px;height:541px;background:#9c9c9c"></div>
<div id="photo" class="abs"></div>
<svg class="abs" style="left:130px;top:190px" width="330" height="230" viewBox="130 190 330 230"><g font-family="'Liberation Serif',serif" font-weight="bold" font-size="48.500" fill="#e5211f" word-spacing="-3"><text x="162.5" y="236.5" textLength="255.0" lengthAdjust="spacingAndGlyphs">I went into the</text><text x="166" y="291" textLength="247.5" lengthAdjust="spacingAndGlyphs">Custom Shape</text><text x="148.5" y="345.5" textLength="283.0" lengthAdjust="spacingAndGlyphs">menu. These are</text><text x="180" y="400" textLength="220" lengthAdjust="spacingAndGlyphs">the Defaults.</text></g></svg>
<div class="abs" style="left:1324px;top:99px;width:15px;height:575px;background:#6f6f6f;border-left:1px solid #4a4a4a"></div>
<div class="abs" style="left:82px;top:659px;width:1257px;height:15px;background:#6f6f6f;border-top:1px solid #3c3c3c"></div>
<div class="abs" style="left:82px;top:660px;width:55px;height:13px;background:#c6c6c6;overflow:hidden"><span class="abs" style="left:10px;top:2px;font-size:12.500px;color:#222">12.5%</span></div>
<div class="abs" style="left:82px;top:673px;width:55px;height:1px;background:#555"></div>
<div class="abs" style="left:1338px;top:72px;width:1px;height:733px;background:#3a3a3a"></div>
<svg class="abs" style="left:1327px;top:103px" width="9" height="6" viewBox="0 0 9 6"><path d="M0 5.500 L4.500 0.500 L9 5.500 Z" fill="#2e2e2e"/></svg>
<svg class="abs" style="left:1327px;top:649px" width="9" height="6" viewBox="0 0 9 6"><path d="M0 0.500 L4.500 5.500 L9 0.500 Z" fill="#2e2e2e"/></svg>
<svg class="abs" style="left:1314px;top:662px" width="6" height="9" viewBox="0 0 6 9"><path d="M0.500 0 L5.500 4.500 L0.500 9 Z" fill="#2e2e2e"/></svg>

<div id="rightpanel" class="abs">
<div class="abs" style="left:0;top:1px;width:261px;height:25px;background:linear-gradient(#dedede,#ececec)"></div>
<div class="abs" style="left:0;top:26px;width:261px;height:1px;background:#222"></div>
<div class="abs" style="left:0;top:27px;width:261px;height:29px;background:#e6e6e6"></div>
<div class="abs" style="left:0;top:56px;width:261px;height:1px;background:#333"></div>
<!-- icons (panel-relative: x-1339, y-72) -->
<svg class="abs" style="left:8px;top:6px" width="16" height="15" viewBox="0 0 16 15"><path d="M1.5 1.5 H14.500 V13.500 H8 L1.5 7.500 Z" fill="#eef4fc" stroke="#2c4a86" stroke-width="1.3" stroke-linejoin="round"/><path d="M1.5 7.500 H8 V13.500" fill="#cfe0f6" stroke="#2c4a86" stroke-width="1.1" stroke-linejoin="round"/></svg>
<svg class="abs" style="left:34px;top:4px" width="18" height="17" viewBox="0 0 18 17"><rect x="6.500" y="1" width="10.500" height="10.500" rx="1" fill="#fff" stroke="#333" stroke-width="1.1"/><rect x="4.200" y="3" width="10.500" height="10.500" rx="1" fill="#fff" stroke="#333" stroke-width="1.1"/><path d="M2 5.200 H12.500 V15.500 H5 L2 12.500 Z" fill="#fff" stroke="#333" stroke-width="1.1" stroke-linejoin="round"/><path d="M2 12.500 H5 V15.500" fill="none" stroke="#333" stroke-width="1"/></svg>
<svg class="abs" style="left:59px;top:4px" width="22" height="19" viewBox="0 0 22 19"><circle cx="9" cy="9" r="7.300" fill="#fff" stroke="#2f6fc4" stroke-width="1.6"/><path d="M3.800 14.200 A7.300 7.300 0 0 1 14.200 3.800 Z" fill="#3a7fd6"/><path d="M13.500 14 H20.500 L17 18 Z" fill="#666"/></svg>
<svg class="abs" style="left:89px;top:6px" width="17" height="14" viewBox="0 0 17 14"><rect x="0.500" y="0.500" width="16" height="13" fill="#4a8fdc" stroke="#2f6fc4"/><circle cx="8.500" cy="7" r="3.800" fill="#fff"/></svg>
<svg class="abs" style="left:117px;top:5px" width="14" height="17" viewBox="0 0 14 17"><path d="M3.500 8 V5.500 C3.500 1.500 10.500 1.500 10.500 5.500 V8" fill="none" stroke="#a3b7d6" stroke-width="2"/><rect x="1" y="7.500" width="12" height="8.500" rx="1" fill="#9fb4d4"/><rect x="6.300" y="10" width="1.400" height="3.500" fill="#e6e6e6"/></svg>
<svg class="abs" style="left:143px;top:6px" width="17" height="17" viewBox="0 0 17 17"><rect x="0.500" y="0.500" width="10" height="10" fill="#e6e6e6" stroke="#b5c3da"/><rect x="0.500" y="0.500" width="3.400" height="3.400" fill="#b5c3da"/><rect x="7" y="0.500" width="3.400" height="3.400" fill="#b5c3da"/><rect x="3.800" y="3.800" width="3.300" height="3.300" fill="#b5c3da"/><rect x="0.500" y="7" width="3.400" height="3.400" fill="#b5c3da"/><path d="M10 10 V8.500 C10 6 14 6 14 8.500 V10" fill="none" stroke="#a3b7d6" stroke-width="1.500"/><rect x="8.500" y="10" width="7.500" height="6" rx="0.800" fill="#9fb4d4"/></svg>
<svg class="abs" style="left:205px;top:5px" width="17" height="16" viewBox="0 0 17 16"><rect x="1" y="2.500" width="15" height="2" fill="#9fb4d4"/><rect x="5.500" y="0.500" width="6" height="2" fill="#9fb4d4"/><path d="M2.500 5.500 H14.500 L13.800 15.500 H3.200 Z" fill="#a9bddb"/><path d="M5.500 7 V14 M8.500 7 V14 M11.500 7 V14" stroke="#e6e6e6" stroke-width="1.100"/></svg>
<svg class="abs" style="left:236px;top:8px" width="17" height="12" viewBox="0 0 17 12"><path d="M0.500 2.500 H5.500 L3 5.500 Z" fill="#2c4f8f"/><path d="M7 1.500 H16.500 M7 4.500 H16.500 M7 7.500 H16.500 M7 10.500 H16.500" stroke="#222" stroke-width="1.200"/></svg>
<!-- blend row -->
<div class="abs dd" style="left:5px;top:31px;width:118px;height:19px"><span style="left:9px;top:2px">Normal</span></div>
<svg class="abs" style="left:110px;top:38px" width="8" height="5" viewBox="0 0 8 5"><path d="M0 0.500 H8 L4 4.500 Z" fill="#777"/></svg>
<span class="abs" style="left:134px;top:34px;font-size:12px;color:#333">Opacity:</span>
<div class="abs" style="left:189px;top:31px;width:65px;height:20px;background:#dadada;border:1px solid #9c9c9c"></div>
<div class="abs" style="left:235px;top:32px;width:1px;height:18px;background:#a8a8a8"></div>
<span class="abs" style="left:196px;top:34px;font-size:12px;color:#7a7a7a">100%</span>
<svg class="abs" style="left:240px;top:39px" width="9" height="5" viewBox="0 0 9 5"><path d="M0 0.500 H9 L4.500 4.500 Z" fill="#888"/></svg>
<!-- layer row -->
<div class="abs" style="left:30px;top:57px;width:221px;height:85px;background:linear-gradient(#6da0de,#6390cf 60%,#5f86c2)"></div>
<div class="abs" style="left:61px;top:60px;width:81px;height:80px;background:#7a706b;border:1px solid #1e1e1e"></div>
<svg class="abs" style="left:7px;top:94px" width="16" height="12" viewBox="0 0 16 12"><path d="M1 6 C4 1 12 1 15 6 C12 11 4 11 1 6 Z" fill="#fff" stroke="#222" stroke-width="1.300"/><circle cx="8" cy="5.800" r="2.800" fill="#222"/><circle cx="7.200" cy="5" r="0.900" fill="#fff"/></svg>
<svg class="abs" style="left:38px;top:92px" width="8" height="16" viewBox="0 0 8 16"><rect x="1.200" y="1" width="5.600" height="8" rx="2.800" fill="none" stroke="#4d78b8" stroke-width="1.300"/><rect x="1.200" y="7" width="5.600" height="8" rx="2.800" fill="none" stroke="#4d78b8" stroke-width="1.300"/></svg>
<span class="abs" style="left:157px;top:94px;font-size:12px;font-style:italic;color:#fff">Backgr...</span>
<svg class="abs" style="left:219px;top:92px" width="17" height="17" viewBox="0 0 17 17"><rect x="0.500" y="0.500" width="10" height="10" fill="#dfe9f7" stroke="#c4d4ec"/><rect x="0.500" y="0.500" width="3.400" height="3.400" fill="#fff"/><rect x="7" y="0.500" width="3.400" height="3.400" fill="#fff"/><rect x="3.800" y="3.800" width="3.300" height="3.300" fill="#fff"/><rect x="0.500" y="7" width="3.400" height="3.400" fill="#fff"/><rect x="3.900" y="0.500" width="3.100" height="3.300" fill="#7fa6dc"/><rect x="0.500" y="3.900" width="3.300" height="3.100" fill="#7fa6dc"/><path d="M10 10 V8.500 C10 6 14 6 14 8.500 V10" fill="none" stroke="#3569b5" stroke-width="1.400"/><rect x="8.500" y="10" width="7.500" height="6" rx="0.800" fill="#4a7cc4" stroke="#2d5ba3" stroke-width="0.600"/></svg>
<!-- scrollbar -->
<div class="abs" style="left:252px;top:57px;width:9px;height:676px;background:#cfcfcf;border-left:1px solid #bdbdbd"></div>
<svg class="abs" style="left:253px;top:62px" width="7" height="5" viewBox="0 0 7 5"><path d="M0 4.500 L3.500 0.500 L7 4.500 Z" fill="#222"/></svg>
<svg class="abs" style="left:253px;top:723px" width="7" height="5" viewBox="0 0 7 5"><path d="M0 0.500 L3.500 4.500 L7 0.500 Z" fill="#222"/></svg>
</div>
<div id="options" class="abs">
<span class="abs" style="left:12px;top:8px;font-size:12.500px;color:#1a1a1a">Shape -</span>
<div class="abs" style="left:9px;top:30px;width:33px;height:30px;background:linear-gradient(#a4a4a4,#b2b2b2 30%);border:1px solid #1c1c1c;box-shadow:0 0 0 0.400px #1c1c1c;border-radius:4px"></div>
<svg class="abs" style="left:12px;top:32px" width="26" height="26" viewBox="2 2 26 26"><path d="M14 5.500 C17 4.500 18.500 8 17.500 10 C20 8 24 7.500 25.500 10 C26.500 13 22 13.500 20 15.500 C22 18 22.500 22.500 19 23 C16 23 15.500 20 14.500 18 C12 19.500 10 23.500 6.500 23 C3.500 22 4.500 18.500 7.500 16.500 C5.500 15 4.500 11.500 7.500 10.500 C10 10 11 11.500 12.500 11 C11.500 9 11.500 6.500 14 5.500 Z" fill="#3f86db" stroke="#2a5fa8" stroke-width="0.600"/></svg>
<div class="abs" style="left:49px;top:38px;width:21px;height:15px;background:linear-gradient(#62a6ea,#3f86db);border:1px solid #2f6dbb"></div>
<div class="abs" style="left:83px;top:38px;width:21px;height:15px;background:linear-gradient(#62a6ea,#3f86db);border:1px solid #2f6dbb;border-radius:4px"></div>
<div class="abs" style="left:13px;top:69px;width:22px;height:16px;background:linear-gradient(#62a6ea,#3f86db);border:1px solid #2f6dbb;border-radius:50%"></div>
<svg class="abs" style="left:49px;top:68px" width="20" height="18" viewBox="0 0 20 18"><defs><linearGradient id="bg2" x1="0" y1="0" x2="0" y2="1"><stop offset="0" stop-color="#62a6ea"/><stop offset="1" stop-color="#3f86db"/></linearGradient></defs><path d="M0.500 9 L5.200 0.800 H14.800 L19.500 9 L14.800 17.200 H5.200 Z" fill="url(#bg2)" stroke="#2f6dbb" stroke-width="0.800"/></svg>
<svg class="abs" style="left:83px;top:66px" width="21" height="20" viewBox="0 0 24 23"><path d="M12 1 L15 8.500 L23 9 L16.800 14.200 L18.800 22 L12 17.700 L5.200 22 L7.200 14.200 L1 9 L9 8.500 Z" fill="url(#bg2)" stroke="#2f6dbb" stroke-width="0.800"/></svg>
<svg class="abs" style="left:14px;top:99px" width="21" height="19" viewBox="0 0 21 19"><path d="M2 17 L19 2" stroke="#3f86db" stroke-width="2.200"/></svg>
<svg class="abs" style="left:53px;top:99px" width="14" height="20" viewBox="0 0 14 20"><path d="M1.500 1 V15.500 L5 12 L8 19 L10.500 18 L7.500 11 H12.500 Z" fill="#6a6a6a" stroke="#444" stroke-width="0.600"/></svg>
<div class="abs" style="left:119px;top:19px;width:1px;height:101px;background:repeating-linear-gradient(#111 0 1.700px,transparent 1.700px 3.300px)"></div>
<div class="abs" style="left:133px;top:31px;width:74px;height:53px;background:linear-gradient(#8c8c8c,#787878);border:1px solid #222"></div>
<div class="abs" style="left:134px;top:32px;width:59px;height:51px;background:#fff;border-right:1px solid #222"></div>
<svg class="abs" style="left:136px;top:33px" width="56" height="50" viewBox="0 0 56 50"><path d="M52.7 15.9 L52.4 19.6 L51.8 23.2 L50.7 26.6 L49.2 29.9 L47.4 32.9 L45.3 35.6 L42.9 38.0 L40.2 40.0 L37.4 41.7 L34.5 43.1 L31.4 44.0 L28.3 44.6 L25.2 44.8 L22.2 44.7 L19.2 44.1 L16.4 43.3 L13.7 42.1 L11.2 40.6 L9.0 38.9 L7.0 37.0 L5.3 34.8 L3.9 32.5 L2.7 30.1 L1.9 27.6 L1.4 25.1 L1.2 22.5 L1.3 20.0 L1.7 17.6 L2.4 15.3 L3.4 13.1 L4.5 11.0 L5.9 9.2 L7.5 7.5 L9.3 6.1 L11.1 4.9 L13.1 4.0 L15.1 3.3 L17.2 2.8 L19.3 2.7 L21.4 2.7 L23.4 3.0 L25.3 3.6 L27.1 4.3 L28.8 5.3 L30.3 6.4 L31.7 7.7 L32.9 9.1 L33.9 10.6 L34.7 12.2 L35.2 13.9 L35.6 15.6 L35.8 17.3 L35.7 19.0 L35.5 20.6 L35.1 22.2 L34.5 23.7 L33.7 25.1 L32.8 26.4 L31.8 27.5 L30.6 28.5 L29.4 29.3 L28.1 30.0 L26.7 30.5 L25.3 30.8 L23.9 31.0 L22.5 31.0 L21.2 30.8 L19.9 30.4 L18.6 30.0 L17.5 29.3 L16.4 28.6 L15.5 27.8 L14.7 26.8 L14.0 25.8 L13.4 24.7 L13.0 23.6 L12.7 22.5 L12.6 21.3 L12.6 20.2 L12.7 19.1 L13.0 18.0 L13.4 17.0 L13.9 16.1 L14.5 15.2 L15.1 14.4 L15.9 13.7 L16.7 13.1 L17.6 12.7 L18.5 12.3 L19.4 12.1 L20.4 12.0 L21.3 12.0 L22.2 12.1 L23.1 12.3 L24.0 12.6 L24.7 13.0 L25.5 13.5 L26.1 14.0 L26.7 14.6 L27.1 15.3 L27.5 16.0 L27.8 16.8 L28.0 17.5 L28.1 18.3 L28.2 19.1 L28.1 19.8 L27.9 20.5 L27.7 21.2 L27.4 21.9 L27.0 22.5 L26.5 23.0 L26.0 23.5 L25.5 23.9 L24.9 24.2 L24.3 24.4 L23.7 24.6 L23.0 24.7 L22.4 24.7 L21.8 24.7 L21.2 24.6 L20.6 24.4 L20.1 24.1 L19.6 23.8 L19.2 23.4 L18.8 23.0 L18.4 22.6 L18.2 22.1 L17.9 21.6 L17.8 21.1 L17.7 20.6 L17.7 20.1 L17.7 19.5 L17.8 19.1 L18.0 18.6 L18.2 18.2 L18.4 17.7 L18.7 17.4 L19.1 17.1 L19.4 16.8 L19.8 16.5 L20.2 16.4 L20.6 16.2 L21.1 16.2 L21.5 16.1 L21.9 16.2 L22.3 16.3 L22.7 16.4 L23.1 16.5 L23.4 16.7 L23.7 17.0 L24.0 17.3 L24.2 17.5 L24.4 17.9 L24.5 18.2 L24.6 18.5 L24.7 18.9 L24.7 19.2 L24.7 19.6 L24.7 19.9 L24.6 20.2 L24.4 20.5 L24.3 20.8 L24.1 21.1" fill="none" stroke="#222" stroke-width="1.100"/></svg>
<svg class="abs" style="left:195px;top:52px" width="10" height="7" viewBox="0 0 10 7"><path d="M0.500 0.500 H9.500 L5 5 Z" fill="#333"/><path d="M0.500 1.500 L5 6.200 L9.500 1.500" fill="none" stroke="#fff" stroke-width="1"/></svg>
<span class="abs" style="left:135px;top:89px;font-size:12px;color:#1a1a1a">Spiral</span>
<div class="abs" style="left:211px;top:31px;width:51px;height:40px;background:#b6b6b6;border:1px solid #1e1e1e"></div>
<svg class="abs" style="left:224px;top:39px" width="24" height="24" viewBox="0 0 24 24"><rect x="3.500" y="3.500" width="17" height="17" fill="#fff" stroke="#222"/><path d="M1.500 1.500 L22.500 22.500" stroke="#d11" stroke-width="1.600"/></svg>
<svg class="abs" style="left:263px;top:49px" width="10" height="6" viewBox="0 0 10 6"><path d="M0 0.500 H10 L5 5.500 Z" fill="#333"/></svg>
<div class="abs" style="left:211px;top:81px;width:51px;height:28px;background:#fff;border:1px solid #9a9a9a"></div>
<svg class="abs" style="left:249px;top:98px" width="8" height="5" viewBox="0 0 8 5"><path d="M0 0.500 H8 L4 4.500 Z" fill="#333"/></svg>
<div class="abs" style="left:288px;top:20px;width:1px;height:100px;background:repeating-linear-gradient(#111 0 1.700px,transparent 1.700px 3.300px)"></div>
<div class="abs dd" style="left:300px;top:32px;width:167px;height:24px"><span style="left:9px;top:5px">Unconstrained</span></div>
<svg class="abs" style="left:450px;top:41px" width="10" height="6" viewBox="0 0 10 6"><path d="M0 0.500 H10 L5 5.500 Z" fill="#444"/></svg>
<span class="abs" style="left:305px;top:69px;font-size:12px;color:#777">W:</span>
<div class="abs" style="left:328px;top:68px;width:50px;height:21px;background:#c4c4c4;border:1px solid #999"></div>
<span class="abs" style="left:396px;top:69px;font-size:12px;color:#777">H:</span>
<div class="abs" style="left:416px;top:68px;width:50px;height:21px;background:#c4c4c4;border:1px solid #999"></div>
<div class="abs" style="left:300px;top:102px;width:14px;height:14px;background:#fff;border:1px solid #777"></div>
<span class="abs" style="left:320px;top:102px;font-size:12px;color:#1a1a1a">From Center</span>
<div class="abs" style="left:479px;top:20px;width:1px;height:100px;background:repeating-linear-gradient(#111 0 1.700px,transparent 1.700px 3.300px)"></div>
<div class="abs" style="left:491px;top:31px;width:28px;height:26px;background:#aaa;border:1px solid #555"></div>
<div class="abs" style="left:494px;top:34px;width:22px;height:20px;background:#e4e4e4;border:1px solid #666"></div>
<svg class="abs" style="left:524px;top:35px" width="22" height="18" viewBox="0 0 22 18"><rect x="1.500" y="1.500" width="11" height="10" fill="#cfcfcf" stroke="#a9a9a9"/><rect x="8.500" y="6.500" width="11" height="10" fill="#c9c9c9" stroke="#a9a9a9"/></svg><svg class="abs" style="left:554px;top:35px" width="22" height="18" viewBox="0 0 22 18"><rect x="1.500" y="1.500" width="11" height="10" fill="#cfcfcf" stroke="#a9a9a9"/><rect x="8.500" y="6.500" width="11" height="10" fill="#c9c9c9" stroke="#a9a9a9"/></svg><svg class="abs" style="left:584px;top:35px" width="22" height="18" viewBox="0 0 22 18"><rect x="1.500" y="1.500" width="11" height="10" fill="#cfcfcf" stroke="#a9a9a9"/><rect x="8.500" y="6.500" width="11" height="10" fill="#c9c9c9" stroke="#a9a9a9"/></svg><svg class="abs" style="left:614px;top:35px" width="22" height="18" viewBox="0 0 22 18"><rect x="1.500" y="1.500" width="11" height="10" fill="#cfcfcf" stroke="#a9a9a9"/><rect x="8.500" y="6.500" width="11" height="10" fill="#c9c9c9" stroke="#a9a9a9"/></svg>
<span class="abs" style="left:545px;top:60px;font-size:12px;color:#1a1a1a">Normal</span>
<div class="abs" style="left:570px;top:85px;width:68px;height:24px;background:linear-gradient(#dcdcdc,#c6c6c6);border:1px solid #8e8e8e;font-size:12px;color:#666;text-align:center;line-height:22px">Simplify</div>
<svg class="abs" style="left:1183px;top:6px" width="14" height="14" viewBox="0 0 14 14"><circle cx="7" cy="7" r="6.500" fill="#6f6f6f"/><text x="7" y="11" font-size="11" font-weight="bold" text-anchor="middle" fill="#e2e2e2" font-family="Liberation Sans">?</text></svg>
<svg class="abs" style="left:1205px;top:8px" width="17" height="12" viewBox="0 0 17 12"><path d="M0.500 2.500 H5.500 L3 5.500 Z" fill="#2c5fb0"/><path d="M7 1.500 H16 M7 4.500 H16 M7 7.500 H16 M7 10.500 H16" stroke="#2c5fb0" stroke-width="1.100"/></svg>
<svg class="abs" style="left:1232px;top:9px" width="12" height="8" viewBox="0 0 12 8"><path d="M1 1 L6 6 L11 1" fill="none" stroke="#222" stroke-width="2"/></svg>
</div>
<div class="abs" style="left:0;top:804px;width:1600px;height:1px;background:#3a3a3a"></div>

<div class="abs" style="left:136px;top:471px;width:232px;height:233px;background:#c1c1c1;border:1px solid #2c2c2c"></div>
<div class="abs" style="left:137px;top:507px;width:230px;height:1px;background:#2c2c2c"></div>
<svg class="abs" style="left:137px;top:508px" width="220" height="195" viewBox="137 508 220 195">
<rect x="137" y="508" width="220" height="195" fill="#fff"/>
<g stroke="#c8c8c8" stroke-width="1" fill="none"><path d="M137 511.500 H345 M137 559.500 H345 M137 607.500 H345 M137 655.500 H345 M188.500 508 V703 M240.500 508 V703 M292.500 508 V655 M344.500 508 V655"/></g>
<g fill="#000">
<!-- pushpin -->
<ellipse cx="157" cy="521.500" rx="8.200" ry="5" transform="rotate(-24 157 521.500)"/>
<path d="M152.500 526 L162.500 521.500 L172 541 L162 547 Z"/>
<path d="M158.500 526.500 L160.500 525.500 L169.500 544 L167.500 545 Z" fill="#fff"/>
<ellipse cx="166.500" cy="545" rx="9" ry="5.200" transform="rotate(-28 166.500 545)"/>
<path d="M167 545.500 L170 543.500 L171.500 547 L168.500 548.500 Z" fill="#fff"/>
<path d="M169 549 L174.500 556 L170.500 548 Z"/>
<!-- scissors -->
<g fill="none" stroke="#000" stroke-width="2"><ellipse cx="197.500" cy="529.300" rx="6.800" ry="4" transform="rotate(14 197.500 529.300)"/><ellipse cx="197.500" cy="540.400" rx="6.800" ry="3.800" transform="rotate(-14 197.500 540.400)"/></g>
<path d="M203 537.600 L233.500 525.600 L236.500 527.300 L214 537.600 L204.500 540.600 Z"/>
<path d="M203 532.400 L204.500 529.800 L214 533.200 L236.500 541.600 L234.500 544 Z"/>
<!-- flourish -->
<path d="M251 525.500 C245 528 242.500 536 245.500 541.500 C247.500 544.500 252.500 544 254 542 C249.500 540.500 248 534 251 525.500 Z" stroke="#000" stroke-width="0.800"/>
<path d="M251.500 527.500 C255.500 523.500 262.500 524.500 266 529.500 C270 536 276 540.500 282.500 539 C286 538 287.500 535 286 532.500 C285 531 283 531.500 283.500 533.200 C284 530.500 288.500 530 289.200 534 C290 540 283.500 546 275 546.300 C266.500 546.600 259.500 543 258 537.500 C260.500 540 264.500 540.500 266.500 539.500 C262 537 260 530 251.500 527.500 Z" stroke="#000" stroke-width="0.800"/>
<path d="M263 531.500 C266.500 536.500 272.500 541.500 279.500 541.800 C273.500 543.500 266 540 263 531.500 Z" fill="#fff"/>
<!-- heart ornament -->
<path d="M308.500 536 C307 529 313 524.500 319 527.500 C321 523 328 522 332 526 C336 530 335 537 333.500 540.500 C335.500 543.500 339 542.500 339 540 C339 538.600 337.300 538.800 337.500 540 C336.800 537.500 341 536.800 341.500 540.500 C342 545 336 547.500 331.500 545.500 C327 549.500 321 552.500 317.500 553.500 C316.500 548 310 543 308.500 536 Z"/>
<path d="M303 516.500 C305.500 514.800 308.500 516.500 308 519.500 C306.800 518.200 305 518.800 305 520.500 C305.500 525 310.500 528 311.500 534 L309.500 535 C308.500 530 302.500 527 302 521 C301.900 519.200 302.200 517.600 303 516.500 Z"/>
<path d="M296 544 C297 540.500 301 538 305.500 538.300 C304 540.500 304.500 543.500 306.500 545.500 C303.500 546 302.500 549.500 305 554 C301 553 299 549.500 299.500 546.500 C298.500 545.500 297 545 296 544 Z"/>
<path d="M304.500 523 C308 527.500 314 529 318.500 535" fill="none" stroke="#000" stroke-width="1.400"/>
<!-- circle -->
<circle cx="162.500" cy="583.400" r="20.600" fill="none" stroke="#000" stroke-width="1.500"/>
<!-- square frame -->
<path fill-rule="evenodd" d="M193 562 H236 V605 H193 Z M201.300 570.300 V596.700 H227.700 V570.300 Z"/>
<!-- octagon -->
<polygon points="257.6,561.9 275.4,561.9 288.0,574.5 288.0,592.3 275.4,604.9 257.6,604.9 245.0,592.3 245.0,574.5"/>
<!-- check -->
<path d="M297 589 L309 583 L317 594 C322 581 331 568 339 562.500 C338 567 338.500 572 340 576 C332 584 324 594 319 604.500 L314 601 Z"/>
<!-- recycle -->
<polygon points="148.1,620.4 153.7,611.5 157.6,610.6 162.1,614.8 155.7,625.4" stroke="#000" stroke-width="0.600" stroke-linejoin="round"/>
<polygon points="157.6,610.3 170.4,610.1 173.2,615.9 176.5,614.2 172.6,622.9 163.7,622.3 166.0,620.6 162.1,614.5" stroke="#000" stroke-width="0.600" stroke-linejoin="round"/>
<polygon points="170.1,628.2 177.6,623.1 182.9,632.9 181.5,636.5 176.8,638.7" stroke="#000" stroke-width="0.600" stroke-linejoin="round"/>
<polygon points="169.3,636.5 169.0,639.3 176.8,639.3 182.1,636.5 176.8,648.2 169.9,649.0 169.6,652.1 164.6,644.6" stroke="#000" stroke-width="0.600" stroke-linejoin="round"/>
<polygon points="144.5,637.9 150.9,639.0 161.8,639.0 161.8,649.0 150.6,649.0" stroke="#000" stroke-width="0.600" stroke-linejoin="round"/>
<polygon points="142.8,626.2 151.8,626.2 155.4,633.7 152.9,632.9 150.4,637.6 144.2,636.8 143.1,632.1 145.4,628.2" stroke="#000" stroke-width="0.600" stroke-linejoin="round"/>
<!-- no sign -->
<circle cx="214.500" cy="631.300" r="18.300" fill="none" stroke="#000" stroke-width="5.600"/>
<path d="M201 619 L228 644" stroke="#000" stroke-width="5" fill="none"/>
<!-- cloud -->
<circle cx="256" cy="622" r="6.5"/><circle cx="262" cy="617" r="6.5"/><circle cx="270" cy="616" r="7"/><circle cx="278" cy="618" r="6.5"/><circle cx="282" cy="624" r="6.5"/><circle cx="279" cy="631" r="6.5"/><circle cx="271" cy="634" r="7"/><circle cx="262" cy="633" r="6.5"/><circle cx="255" cy="629" r="6"/><circle cx="268" cy="625" r="10"/><ellipse cx="260" cy="643" rx="5" ry="3.6"/><ellipse cx="254.500" cy="650.500" rx="2.300" ry="2"/>
<!-- paws -->
<ellipse cx="321.5" cy="621" rx="5.600" ry="6.800" transform="rotate(-20 321.5 621)"/><ellipse cx="328.0" cy="612.5" rx="3.300" ry="3" /><ellipse cx="334.0" cy="619" rx="3.300" ry="3"/><ellipse cx="330.0" cy="626.5" rx="3.200" ry="2.800"/><ellipse cx="301.5" cy="642.5" rx="5.600" ry="6.800" transform="rotate(-20 301.5 642.5)"/><ellipse cx="308.0" cy="634.0" rx="3.300" ry="3" /><ellipse cx="314.0" cy="640.5" rx="3.300" ry="3"/><ellipse cx="310.0" cy="648.0" rx="3.200" ry="2.800"/>
<!-- diamonds -->
<path d="M148.7 658.4 L155.8 665.5 L148.7 672.6 L141.6 665.5 Z"/><path d="M148.7 672.3 L155.8 679.4 L148.7 686.5 L141.6 679.4 Z"/><path d="M148.7 686.2 L155.8 693.3 L148.7 700.4 L141.6 693.3 Z"/><path d="M162.6 658.4 L169.7 665.5 L162.6 672.6 L155.5 665.5 Z"/><path d="M162.6 672.3 L169.7 679.4 L162.6 686.5 L155.5 679.4 Z"/><path d="M162.6 686.2 L169.7 693.3 L162.6 700.4 L155.5 693.3 Z"/><path d="M176.5 658.4 L183.6 665.5 L176.5 672.6 L169.4 665.5 Z"/><path d="M176.5 672.3 L183.6 679.4 L176.5 686.5 L169.4 679.4 Z"/><path d="M176.5 686.2 L183.6 693.3 L176.5 700.4 L169.4 693.3 Z"/>
<!-- kanji -->
<path stroke="#000" stroke-width="0.900" d="M206 664 C211 660 219 659 223 661 C226 661 229.500 661.500 231 663 C228 666 222 668.500 218 669.500 C216 668.500 214 667 213.500 666 C216 666 219 665 221 663.500 C216 663 211 664 206 664 Z"/>
<path stroke="#000" stroke-width="0.900" d="M201 675.500 C199.500 673.500 200.500 672 203 672.500 C208 674 220 673.500 236 674 C237.500 674.500 237.500 676 236 676.500 C224 676.500 212 677 205 678.500 C203 678.500 202 677.500 201 675.500 Z"/>
<path stroke="#000" stroke-width="0.900" d="M217 668 C219.500 668.500 221.500 670 221.500 672 C221 680 219 688 216 693.500 C213.500 697.500 210 700 206 699.500 C201 697 196 693.500 191 691 C196 692 204 694.500 208.500 694 C212 693 214.500 688 216 682 C217 677 217.500 672 217 668 Z"/>
</g>
</svg>
<div class="abs" style="left:356px;top:508px;width:11px;height:195px;background:#bdbdbd;border-left:1px solid #8a8a8a"></div>
<div class="abs" style="left:357px;top:602px;width:10px;height:86px;background:#fdfdfd;border:1px solid #9a9a9a;border-left:none"></div>
<svg class="abs" style="left:359px;top:641px" width="6" height="8" viewBox="0 0 6 8"><path d="M0 1.500 H6 M0 3.500 H6 M0 5.500 H6" stroke="#555" stroke-width="1"/></svg>
<svg class="abs" style="left:358px;top:512px" width="8" height="5" viewBox="0 0 8 5"><path d="M0.500 4.500 L4 0.500 L7.500 4.500 Z" fill="#333"/></svg>
<svg class="abs" style="left:358px;top:694px" width="8" height="5" viewBox="0 0 8 5"><path d="M0.500 0.500 L4 4.500 L7.500 0.500 Z" fill="#333"/></svg>
<span class="abs" style="left:144px;top:482px;font-size:12px;color:#1a1a1a">Shapes</span>
<div class="abs dd" style="left:189px;top:476px;width:128px;height:24px"><span style="left:10px;top:5px">Default</span></div>
<svg class="abs" style="left:300px;top:485px" width="11" height="7" viewBox="0 0 11 7"><path d="M0 0.500 H11 L5.500 6.500 Z" fill="#555"/></svg>
<svg class="abs" style="left:339px;top:483px" width="16" height="11" viewBox="0 0 16 11"><path d="M0.500 3 H5 L2.800 5.800 Z" fill="#2c5fb0"/><path d="M7 1.500 H15 M7 4.500 H15 M7 7.500 H15 M7 10.500 H15" stroke="#2c5fb0" stroke-width="1.100"/></svg>
<svg class="abs" style="left:357px;top:472px" width="10" height="10" viewBox="0 0 10 10"><g fill="#333"><rect x="1" y="1" width="1" height="1"/><rect x="3" y="1" width="1" height="1"/><rect x="5" y="1" width="1" height="1"/><rect x="7" y="1" width="1" height="1"/><rect x="5" y="3" width="1" height="1"/><rect x="7" y="3" width="1" height="1"/><rect x="7" y="5" width="1" height="1"/></g></svg>
<!-- red annotations -->
<svg class="abs" style="left:0;top:400px" width="420" height="150" viewBox="0 400 420 150"><ellipse cx="60.200" cy="452.800" rx="41.300" ry="31.300" fill="none" stroke="#d9262d" stroke-width="2"/><ellipse cx="249" cy="490.800" rx="98.600" ry="36.500" fill="none" stroke="#d9262d" stroke-width="2"/></svg>

<div id="taskbar" class="abs">
<!-- photo bin -->
<svg class="abs" style="left:22px;top:7px" width="29" height="25" viewBox="0 0 29 25"><path d="M1 3 C1 2 2 1 3 1 H11 L13.500 3.500 H26 C27 3.500 28 4.500 28 5.500 V22 C28 23 27 24 26 24 H3 C2 24 1 23 1 22 Z" fill="#4a8edb" stroke="#2d67b6" stroke-width="0.800"/><rect x="3.500" y="7" width="22" height="14.500" fill="#8fbdf0"/><path d="M3.500 21.500 L10 13 L14 18 L18 15 L25.500 21.500 Z" fill="#2d67b6"/><circle cx="20" cy="11" r="1.800" fill="#2d67b6"/></svg>
<span class="tl" style="margin-top:1px;left:-13px;top:40px">Photo Bin</span>
<div class="abs" style="left:70px;top:5px;width:1px;height:47px;background:repeating-linear-gradient(#333 0 1.200px,transparent 1.200px 4.100px)"></div>
<div class="abs" style="left:87px;top:3px;width:44px;height:36px;background:#bcbcbc;border:1px solid #a4a4a4;border-radius:3px"></div>
<svg class="abs" style="left:94px;top:8px" width="30" height="26" viewBox="0 0 30 26"><circle cx="3" cy="4" r="1.600" fill="#555"/><circle cx="3" cy="9.500" r="1.600" fill="#555"/><circle cx="3" cy="15" r="1.600" fill="#555"/><circle cx="3" cy="20.500" r="1.600" fill="#555"/><path d="M7 4 H18 M7 9.500 H14 M7 15 H11" stroke="#555" stroke-width="1.800"/><path d="M12 22 L13.500 16.500 L24 5 L28 9 L17.500 20.500 Z" fill="#3f86db" stroke="#2c66b8" stroke-width="0.700"/><path d="M12 22 L13.500 16.500 L17.500 20.500 Z" fill="#333"/></svg>
<span class="tl" style="margin-top:1px;left:60px;top:40px">Tool Options</span>
<div class="abs" style="left:148px;top:5px;width:1px;height:47px;background:repeating-linear-gradient(#333 0 1.200px,transparent 1.200px 4.100px)"></div>
<!-- undo -->
<svg class="abs" style="left:164px;top:6px" width="30" height="28" viewBox="0 0 30 28"><path d="M6 8 H16 C27 8 27 24 16 24 H11" fill="none" stroke="#3f86db" stroke-width="3.200"/><path d="M1 8 L10 1 V15 Z" fill="#3f86db"/></svg>
<span class="tl" style="margin-top:1px;left:130px;top:40px">Undo</span>
<svg class="abs" style="left:228px;top:6px" width="30" height="28" viewBox="0 0 30 28"><path d="M24 8 H14 C3 8 3 24 14 24 H19" fill="none" stroke="#3f86db" stroke-width="3.200"/><path d="M29 8 L20 1 V15 Z" fill="#3f86db"/></svg>
<span class="tl" style="margin-top:1px;left:194px;top:40px">Redo</span>
<!-- rotate -->
<svg class="abs" style="left:287px;top:4px" width="36" height="32" viewBox="0 0 36 32"><path d="M8 9 C14 2 26 4 28.500 13 C31 22 24 29 16 28" fill="none" stroke="#3f86db" stroke-width="3.200"/><path d="M2 3 L13 4.500 L5 14 Z" fill="#3f86db"/><circle cx="5" cy="19" r="1.900" fill="#3f86db"/><circle cx="8" cy="24.500" r="1.900" fill="#3f86db"/><circle cx="13" cy="28" r="1.900" fill="#3f86db"/></svg>
<svg class="abs" style="left:325px;top:19px" width="7" height="5" viewBox="0 0 7 5"><path d="M0 0.500 H7 L3.500 4.500 Z" fill="#333"/></svg>
<span class="tl" style="margin-top:1px;left:255px;top:40px">Rotate</span>
<!-- layout -->
<svg class="abs" style="left:351px;top:8px" width="32" height="28" viewBox="0 0 32 28"><rect x="1" y="1" width="27" height="21" fill="#cfe2f8" stroke="#2c66b8" stroke-width="1"/><rect x="3" y="3" width="9" height="17" fill="#3f86db"/><rect x="14" y="3" width="12" height="7.500" fill="#3f86db"/><rect x="14" y="12.500" width="12" height="7.500" fill="#2c66b8"/><path d="M24 24 H31 L27.500 27.500 Z" fill="#333"/></svg>
<span class="tl" style="margin-top:1px;left:316px;top:40px">Layout</span>
<!-- organizer -->
<svg class="abs" style="left:412px;top:10px" width="29" height="23" viewBox="0 0 29 23"><rect x="0.500" y="0.500" width="28" height="22" fill="#3f86db" stroke="#2c66b8"/><rect x="0.500" y="0.500" width="28" height="5" fill="#2c66b8"/><g fill="#cfe2f8"><rect x="3" y="8" width="6.500" height="5"/><rect x="11.200" y="8" width="6.500" height="5"/><rect x="19.500" y="8" width="6.500" height="5"/><rect x="3" y="15" width="6.500" height="5"/><rect x="11.200" y="15" width="6.500" height="5"/><rect x="19.500" y="15" width="6.500" height="5"/></g></svg>
<span class="tl" style="margin-top:1px;left:377px;top:40px">Organizer</span>
<!-- home -->
<svg class="abs" style="left:481px;top:4px" width="32" height="32" viewBox="0 0 32 32"><path d="M16 1 L31 15 H27 V31 H5 V15 H1 Z" fill="#6ea8ea" stroke="#2c66b8" stroke-width="0.800"/><path d="M16 1 L31 15 H1 Z" fill="#3f86db"/><rect x="12" y="19" width="8" height="12" fill="#e6f0fb" stroke="#2c66b8" stroke-width="0.800"/></svg>
<span class="tl" style="margin-top:1px;left:448px;top:40px">Home Screen</span>
<!-- right -->
<div class="abs" style="left:1239px;top:3px;width:38px;height:36px;background:#bcbcbc;border:1px solid #a4a4a4;border-radius:3px"></div>
<svg class="abs" style="left:1242px;top:7px" width="32" height="30" viewBox="0 0 32 30"><path d="M16 11 L29 18.500 L16 26 L3 18.500 Z" fill="#2c66b8"/><path d="M16 7.500 L29 15 L16 22.500 L3 15 Z" fill="#e8f0fa"/><path d="M16 2 L29 9.500 L16 17 L3 9.500 Z" fill="#5c9be2" stroke="#e8f0fa" stroke-width="1.200"/></svg>
<span class="tl" style="margin-top:1px;left:1208px;top:40px">Layers</span>
<span class="abs" style="left:1306px;top:0px;font-size:30px;font-style:italic;font-weight:bold;color:#4a8ad2;letter-spacing:-1.500px;line-height:36px">fx</span>
<span class="tl" style="margin-top:1px;left:1270px;top:40px">Effects</span>
<svg class="abs" style="left:1363px;top:6px" width="32" height="30" viewBox="0 0 32 30"><circle cx="16" cy="10" r="8.500" fill="#a8c8ee" stroke="#7fa9dd" stroke-width="0.800"/><circle cx="10.500" cy="19.500" r="8.500" fill="#5c9be2" fill-opacity="0.900"/><circle cx="21.500" cy="19.500" r="8.500" fill="#2c66b8" fill-opacity="0.900"/><path d="M16 13 A8.500 8.500 0 0 1 16 26 A8.500 8.500 0 0 1 16 13 Z" fill="#1f4f9a"/></svg>
<span class="tl" style="margin-top:1px;left:1330px;top:40px">Filters</span>
<svg class="abs" style="left:1424px;top:6px" width="32" height="32" viewBox="0 0 32 32"><g transform="rotate(12 20 20)"><rect x="11" y="9" width="16" height="19" fill="#e8f0fa" stroke="#7c9cc6"/><rect x="13.500" y="12" width="11" height="13" fill="#a8c8ee"/></g><g transform="rotate(4 16 16)"><rect x="7" y="5" width="16" height="19" fill="#e8f0fa" stroke="#7c9cc6"/></g><g transform="rotate(-6 12 13)"><rect x="3" y="3" width="16" height="19" fill="#e8f0fa" stroke="#7c9cc6"/><rect x="5.500" y="6" width="11" height="13" fill="#3f86db"/></g></svg>
<span class="tl" style="margin-top:1px;left:1391px;top:40px">Styles</span>
<svg class="abs" style="left:1489px;top:9px" width="26" height="26" viewBox="0 0 26 26"><path d="M13 1 V25 M1 13 H25" stroke="#3f86db" stroke-width="4.400"/></svg>
<span class="tl" style="margin-top:1px;left:1453px;top:40px">Graphics</span>
<svg class="abs" style="left:1550px;top:10px" width="27" height="23" viewBox="0 0 27 23"><rect x="0.500" y="0.500" width="25" height="22" fill="#5c9be2" stroke="#2c66b8"/><rect x="12" y="0.500" width="13.500" height="5" fill="#2c66b8"/></svg>
<svg class="abs" style="left:1581px;top:19px" width="7" height="5" viewBox="0 0 7 5"><path d="M0 0.500 H7 L3.500 4.500 Z" fill="#333"/></svg>
<span class="tl" style="margin-top:1px;left:1513px;top:40px">More</span>
<div class="abs" style="left:391px;top:55px;width:1209px;height:2px;background:#1a1a1a"></div>
</div>
</div>
</body>
</html>
